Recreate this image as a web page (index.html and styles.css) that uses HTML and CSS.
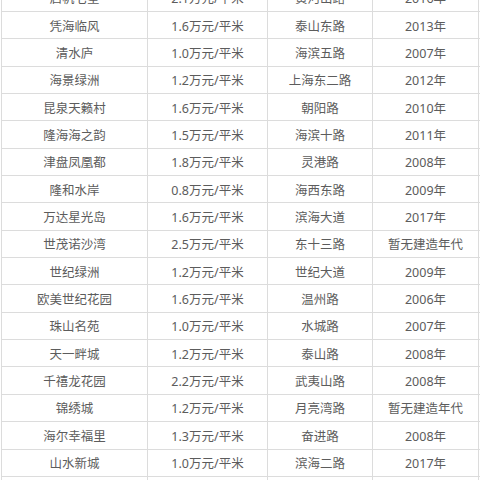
FILE: index.html
```html
<!DOCTYPE html>
<html lang="zh">
<head>
<meta charset="utf-8">
<link rel="stylesheet" href="styles.css">
</head>
<body>
<div class="table">
  <div class="row"><div class="cell">启帆七星</div><div class="cell">2.1万元/平米</div><div class="cell">黄河山路</div><div class="cell">2016年</div></div>
  <div class="row"><div class="cell">凭海临风</div><div class="cell">1.6万元/平米</div><div class="cell">泰山东路</div><div class="cell">2013年</div></div>
  <div class="row"><div class="cell">清水庐</div><div class="cell">1.0万元/平米</div><div class="cell">海滨五路</div><div class="cell">2007年</div></div>
  <div class="row"><div class="cell">海景绿洲</div><div class="cell">1.2万元/平米</div><div class="cell">上海东二路</div><div class="cell">2012年</div></div>
  <div class="row"><div class="cell">昆泉天籁村</div><div class="cell">1.6万元/平米</div><div class="cell">朝阳路</div><div class="cell">2010年</div></div>
  <div class="row"><div class="cell">隆海海之韵</div><div class="cell">1.5万元/平米</div><div class="cell">海滨十路</div><div class="cell">2011年</div></div>
  <div class="row"><div class="cell">津盘凤凰都</div><div class="cell">1.8万元/平米</div><div class="cell">灵港路</div><div class="cell">2008年</div></div>
  <div class="row"><div class="cell">隆和水岸</div><div class="cell">0.8万元/平米</div><div class="cell">海西东路</div><div class="cell">2009年</div></div>
  <div class="row"><div class="cell">万达星光岛</div><div class="cell">1.6万元/平米</div><div class="cell">滨海大道</div><div class="cell">2017年</div></div>
  <div class="row"><div class="cell">世茂诺沙湾</div><div class="cell">2.5万元/平米</div><div class="cell">东十三路</div><div class="cell">暂无建造年代</div></div>
  <div class="row"><div class="cell">世纪绿洲</div><div class="cell">1.2万元/平米</div><div class="cell">世纪大道</div><div class="cell">2009年</div></div>
  <div class="row"><div class="cell">欧美世纪花园</div><div class="cell">1.6万元/平米</div><div class="cell">温州路</div><div class="cell">2006年</div></div>
  <div class="row"><div class="cell">珠山名苑</div><div class="cell">1.0万元/平米</div><div class="cell">水城路</div><div class="cell">2007年</div></div>
  <div class="row"><div class="cell">天一畔城</div><div class="cell">1.2万元/平米</div><div class="cell">泰山路</div><div class="cell">2008年</div></div>
  <div class="row"><div class="cell">千禧龙花园</div><div class="cell">2.2万元/平米</div><div class="cell">武夷山路</div><div class="cell">2008年</div></div>
  <div class="row"><div class="cell">锦绣城</div><div class="cell">1.2万元/平米</div><div class="cell">月亮湾路</div><div class="cell">暂无建造年代</div></div>
  <div class="row"><div class="cell">海尔幸福里</div><div class="cell">1.3万元/平米</div><div class="cell">奋进路</div><div class="cell">2008年</div></div>
  <div class="row"><div class="cell">山水新城</div><div class="cell">1.0万元/平米</div><div class="cell">滨海二路</div><div class="cell">2017年</div></div>
  <div class="row"><div class="cell"></div><div class="cell"></div><div class="cell"></div><div class="cell"></div></div>
</div>
</body>
</html>
```
FILE: styles.css
```css
html, body {
  margin: 0;
  padding: 0;
  background: #ffffff;
  overflow: hidden;
}
.table {
  margin-top: -15.35px;
  margin-left: 1px;
  width: 478px;
  border-left: 1px solid #dcdcdc;
  font-family: "Noto Sans", "Noto Sans CJK SC", sans-serif;
  font-size: 12.5px;
  color: #5c5c5c;
}
.row {
  display: grid;
  grid-template-columns: 146px 120px 105px 106px;
  height: 27.35px;
  box-sizing: border-box;
  border-bottom: 1px solid #dcdcdc;
}
.cell {
  border-right: 1px solid #dcdcdc;
  display: flex;
  align-items: center;
  justify-content: center;
  white-space: nowrap;
}
```
